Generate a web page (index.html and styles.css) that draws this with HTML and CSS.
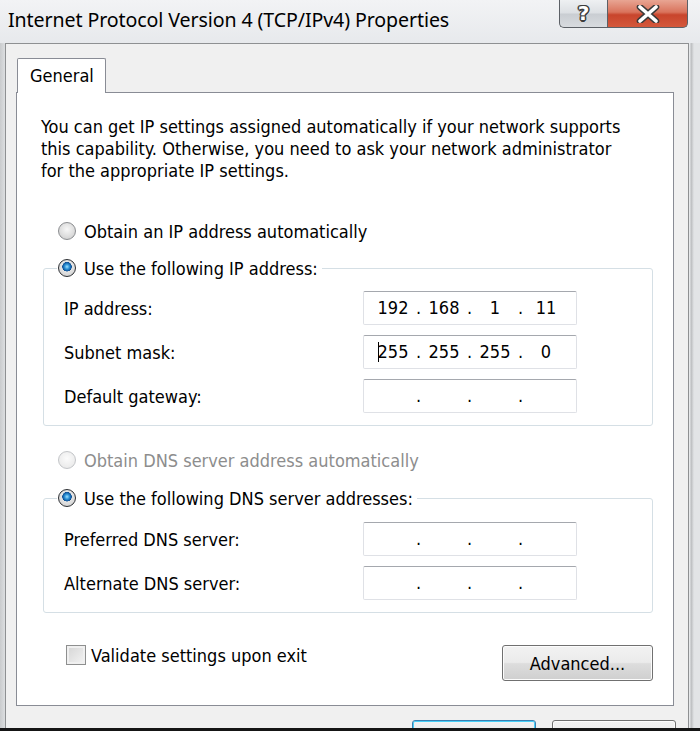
FILE: index.html
```html
<!DOCTYPE html>
<html lang="en">
<head>
  <meta charset="UTF-8">
  <title>Internet Protocol Version 4 (TCP/IPv4) Properties</title>
  <link rel="stylesheet" href="styles.css">
</head>
<body>
  <div class="window">
    <div class="titlebar">
      <span class="title">Internet Protocol Version 4 (TCP/IPv4) Properties</span>
      <div class="caption-buttons">
        <span class="cap-btn help">?</span>
        <span class="cap-btn close">
          <svg width="26" height="18" viewBox="0 0 26 18">
            <path d="M5 2 L21 16 M21 2 L5 16" stroke="#3a3a3a" stroke-width="6.5" stroke-linecap="round"/>
            <path d="M5 2 L21 16 M21 2 L5 16" stroke="#fff" stroke-width="3.6" stroke-linecap="round"/>
          </svg>
        </span>
      </div>
    </div>

    <div class="frame">
      <div class="tabs">
        <span class="tab active">General</span>
      </div>

      <div class="tab-page">
        <p class="intro">You can get IP settings assigned automatically if your network supports
this capability. Otherwise, you need to ask your network administrator
for the appropriate IP settings.</p>

        <div class="option">
          <span class="radio"></span>
          <span>Obtain an IP address automatically</span>
        </div>

        <fieldset class="group">
          <legend>
            <span class="radio checked"></span>
            <span>Use the following IP address:</span>
          </legend>
          <div class="field-row">
            <span>IP address:</span>
            <div class="ip-field">
              <span>192</span><span>.</span><span>168</span><span>.</span><span>1</span><span>.</span><span>11</span>
            </div>
          </div>
          <div class="field-row">
            <span>Subnet mask:</span>
            <div class="ip-field">
              <span><i class="caret"></i>255</span><span>.</span><span>255</span><span>.</span><span>255</span><span>.</span><span>0</span>
            </div>
          </div>
          <div class="field-row">
            <span>Default gateway:</span>
            <div class="ip-field">
              <span></span><span>.</span><span></span><span>.</span><span></span><span>.</span><span></span>
            </div>
          </div>
        </fieldset>

        <div class="option dns-auto disabled">
          <span class="radio"></span>
          <span>Obtain DNS server address automatically</span>
        </div>

        <fieldset class="group dns">
          <legend>
            <span class="radio checked"></span>
            <span>Use the following DNS server addresses:</span>
          </legend>
          <div class="field-row">
            <span>Preferred DNS server:</span>
            <div class="ip-field">
              <span></span><span>.</span><span></span><span>.</span><span></span><span>.</span><span></span>
            </div>
          </div>
          <div class="field-row">
            <span>Alternate DNS server:</span>
            <div class="ip-field">
              <span></span><span>.</span><span></span><span>.</span><span></span><span>.</span><span></span>
            </div>
          </div>
        </fieldset>

        <div class="bottom-row">
          <label class="check">
            <span class="checkbox"></span>
            <span>Validate settings upon exit</span>
          </label>
          <button class="btn advanced">Advanced...</button>
        </div>
      </div>

      <!-- OK / Cancel, cut off by the bottom of the screenshot -->
      <div class="dialog-buttons">
        <button class="btn default" aria-label="OK"></button>
        <button class="btn" aria-label="Cancel"></button>
      </div>
    </div>
  </div>
</body>
</html>
```

FILE: styles.css
```css
body {
  margin: 0;
  padding: 0;
  background: #151515;
  font-family: "DejaVu Sans Condensed", "DejaVu Sans", sans-serif;
  font-size: 18px;
  color: #000;
}

.window {
  width: 700px;
  height: 728px;
  overflow: hidden;
  background: linear-gradient(to right, #c9cbcd 0, #dcdee0 5px, #e6e8ea 690px, #b9bbbd 691px, #e2e4e6 694px);
}

/* Title bar */
.titlebar {
  height: 43px;
  display: flex;
  justify-content: space-between;
  align-items: flex-start;
  background: linear-gradient(to bottom, #f2f3f5, #e7e9ec);
}

.title {
  font-family: "Noto Sans", sans-serif;
  font-size: 19.6px;
  line-height: 40px;
  padding-left: 8px;
  color: #000;
  letter-spacing: -0.1px;
}

.caption-buttons {
  display: flex;
  margin-right: 12px;
}

.cap-btn {
  height: 27px;
  display: flex;
  align-items: center;
  justify-content: center;
  border: 1px solid #5c6066;
  border-top: none;
}

.cap-btn.help {
  width: 47px;
  border-radius: 0 0 0 5px;
  border-right: none;
  background: linear-gradient(to bottom, #eef0f2 0, #dcdfe3 48%, #c9cdd2 52%, #d8dbdf 100%);
  font-family: "DejaVu Sans", sans-serif;
  font-weight: bold;
  font-size: 20px;
  line-height: 27px;
  color: #fff;
  text-shadow:
    1.5px 0 0 #3d3d3d, -1.5px 0 0 #3d3d3d, 0 1.5px 0 #3d3d3d, 0 -1.5px 0 #3d3d3d,
    1px 1px 0 #3d3d3d, -1px -1px 0 #3d3d3d, 1px -1px 0 #3d3d3d, -1px 1px 0 #3d3d3d;
}

.cap-btn.close {
  width: 79px;
  border-radius: 0 0 5px 0;
  background: linear-gradient(to bottom, #e8a593 0, #d9735c 45%, #c8452c 55%, #d4583c 100%);
}

/* Outer client frame */
.frame {
  margin: 0 11px 0 5px;
  padding: 14px 14px 0 10px;
  border: 1px solid #8e9092;
  border-bottom: none;
  background: #f0f0f0;
  height: 700px;
}

.tabs {
  display: flex;
  height: 34px;
  margin-left: 1px;
}

.tab {
  width: 89px;
  height: 35px;
  box-sizing: border-box;
  border: 1px solid #898c95;
  border-bottom: none;
  border-radius: 2px 2px 0 0;
  background: #fff;
  padding-left: 12px;
  line-height: 34px;
  position: relative;
  z-index: 1;
  margin-bottom: -1px;
}

.tab-page {
  background: #fff;
  border: 1px solid #898c95;
  padding: 0 20px 24px 26px;
}

.intro {
  margin: 23px 0 0 -2px;
  line-height: 22px;
  white-space: pre-line;
}

.option {
  display: flex;
  align-items: center;
  gap: 8px;
  height: 22px;
  padding-left: 15px;
  margin-top: 38px;
}

.option.dns-auto {
  margin-top: 23px;
}

.disabled {
  color: #8d8d8d;
}

/* Radio and checkbox */
.radio {
  width: 18px;
  height: 18px;
  box-sizing: border-box;
  border-radius: 50%;
  border: 1px solid #8b8d90;
  background: radial-gradient(circle at 50% 40%, #f7f7f7 0, #dcdcdc 60%, #c7c7c7 100%);
  display: inline-block;
  flex-shrink: 0;
}

.disabled .radio {
  border-color: #c3c5c8;
  background: radial-gradient(circle at 50% 40%, #fbfbfb 0, #ececec 70%, #e0e0e0 100%);
}

.radio.checked {
  background:
    radial-gradient(circle at 50% 42%, #9ee1ff 0, #2a8fd4 2.5px, #0d4f94 4.5px, rgba(0,0,0,0) 5px),
    radial-gradient(circle at 50% 40%, #f7f7f7 0, #dcdcdc 60%, #c7c7c7 100%);
  border-color: #2c2f33;
}

.checkbox {
  width: 20px;
  height: 20px;
  box-sizing: border-box;
  border: 1px solid #8e8f8f;
  background: linear-gradient(135deg, #d4d4d4, #f4f4f4);
  box-shadow: inset 0 0 0 2px #f0f0f0;
  display: inline-block;
  flex-shrink: 0;
}

/* Group boxes */
.group {
  margin: 15px 0 0 0;
  padding: 12px 75px 12px 20px;
  border: 1px solid #d5dfe5;
  border-radius: 3px;
}

.group.dns {
  margin-top: 16px;
  padding-top: 13px;
}

.group legend {
  display: flex;
  align-items: center;
  gap: 8px;
  height: 22px;
  padding: 0 4px 0 1px;
  margin-left: -7px;
}

.field-row {
  display: flex;
  justify-content: space-between;
  align-items: center;
  height: 34px;
}

.field-row + .field-row {
  margin-top: 10px;
}

.ip-field {
  width: 214px;
  height: 34px;
  box-sizing: border-box;
  border: 1px solid #dfe1e6;
  border-top-color: #a5a8ae;
  border-radius: 2px;
  padding-left: 9px;
  display: grid;
  grid-template-columns: 40px 11px 40px 11px 40px 11px 40px;
  align-items: center;
  text-align: center;
  line-height: 32px;
}

.caret {
  display: inline-block;
  width: 1px;
  height: 20px;
  margin-right: -1px;
  background: #000;
  vertical-align: -4px;
}

/* Bottom row */
.bottom-row {
  display: flex;
  justify-content: space-between;
  align-items: flex-start;
  margin-top: 32px;
  padding-left: 23px;
}

.check {
  display: flex;
  align-items: center;
  gap: 5px;
  height: 20px;
}

.btn {
  font-family: inherit;
  font-size: 18px;
  color: #000;
  height: 36px;
  border: 1px solid #707070;
  border-radius: 3px;
  background: linear-gradient(to bottom, #f2f2f2 0, #ebebeb 48%, #dddddd 52%, #cfcfcf 100%);
  box-shadow: inset 0 0 0 1px #fcfcfc;
  padding: 0;
}

.btn.advanced {
  width: 151px;
  margin-right: 0;
}

.dialog-buttons {
  display: flex;
  justify-content: flex-end;
  gap: 16px;
  margin-top: 14px;
  margin-right: -2px;
}

.dialog-buttons .btn {
  width: 124px;
}

.btn.default {
  border-color: #3c7fb1;
  box-shadow: inset 0 0 0 1px #48d0f8;
}
```
